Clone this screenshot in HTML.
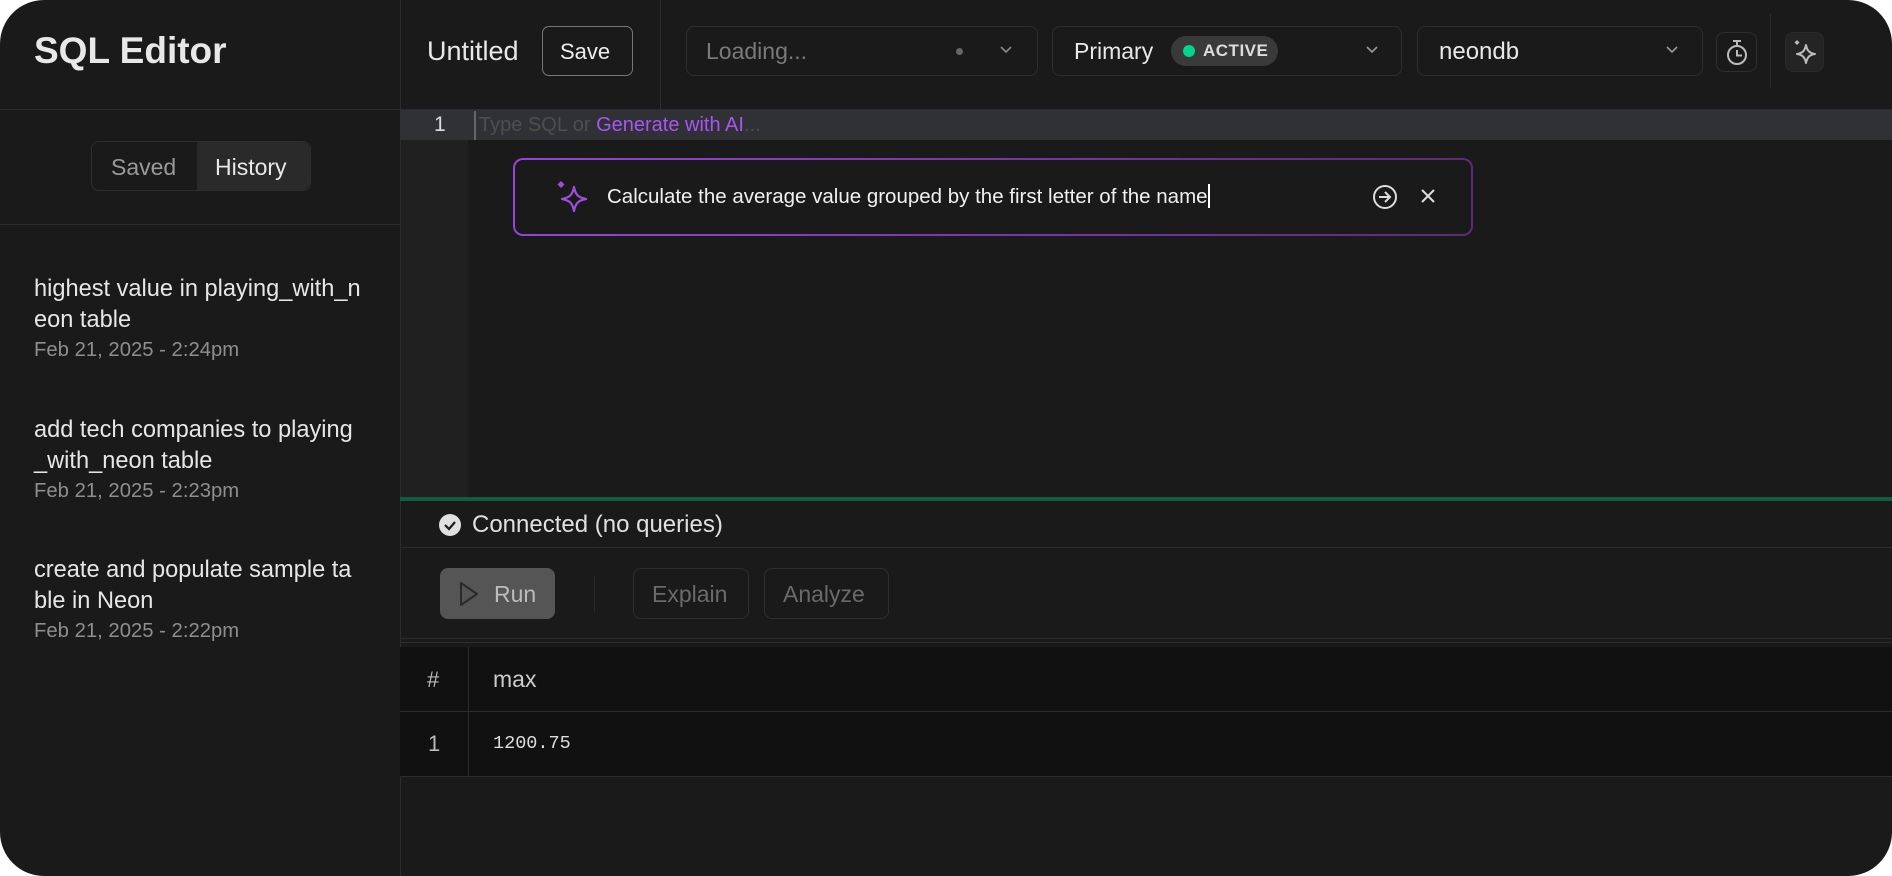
<!DOCTYPE html>
<html><head><meta charset="utf-8"><style>
*{box-sizing:border-box;margin:0;padding:0}
body{width:1892px;height:876px;background:#fff;font-family:"Liberation Sans",sans-serif;overflow:hidden}
.app{position:absolute;left:0;top:0;width:1892px;height:876px;background:#1a1a1a;border-radius:44px;overflow:hidden;color:#e6e6e6}
.abs{position:absolute}
.line{position:absolute;background:#2c2c2c}
.btn{position:absolute;border:1px solid #2e2e2e;border-radius:8px}
.t{position:absolute;white-space:nowrap}
</style></head><body><div class="app">
<!-- sidebar -->
<div class="line" style="left:400px;top:0;width:1px;height:876px"></div>
<div class="line" style="left:0;top:109px;width:1892px;height:1px"></div>
<div class="t" style="left:34px;top:30px;font-size:37px;font-weight:600;color:#e8e8e8">SQL Editor</div>
<div class="btn" style="left:91px;top:141px;width:220px;height:50px;border-color:#2e2e2e"></div>
<div class="abs" style="left:197px;top:142px;width:113px;height:48px;background:#2a2a2a;border-radius:0 8px 8px 0"></div>
<div class="t" style="left:111px;top:154px;font-size:23px;color:#9a9a9a">Saved</div>
<div class="t" style="left:215px;top:154px;font-size:23px;color:#e8e8e8">History</div>
<div class="line" style="left:0;top:224px;width:400px;height:1px"></div>
<div class="abs" style="left:34px;top:274px;font-size:23.6px;line-height:31px;color:#e6e6e6;width:360px">highest value in playing_with_n<br>eon table</div>
<div class="t" style="left:34px;top:339px;font-size:20.3px;color:#8e8e8e">Feb 21, 2025 - 2:24pm</div>
<div class="abs" style="left:34px;top:415px;font-size:23.6px;line-height:31px;color:#e6e6e6">add tech companies to playing<br>_with_neon table</div>
<div class="t" style="left:34px;top:480px;font-size:20.3px;color:#8e8e8e">Feb 21, 2025 - 2:23pm</div>
<div class="abs" style="left:34px;top:555px;font-size:23.6px;line-height:31px;color:#e6e6e6">create and populate sample ta<br>ble in Neon</div>
<div class="t" style="left:34px;top:620px;font-size:20.3px;color:#8e8e8e">Feb 21, 2025 - 2:22pm</div>
<!-- header -->
<div class="t" style="left:427px;top:36px;font-size:27px;color:#e8e8e8">Untitled</div>
<div class="btn" style="left:542px;top:26px;width:91px;height:50px;border-color:#777;border-radius:7px"></div>
<div class="t" style="left:560px;top:39px;font-size:22px;color:#eee">Save</div>
<div class="line" style="left:660px;top:0;width:1px;height:109px"></div>
<div class="btn" style="left:686px;top:26px;width:352px;height:50px"></div>
<div class="t" style="left:706px;top:38px;font-size:23px;color:#7a7a7a">Loading...</div>
<div class="abs" style="left:956px;top:48px;width:7px;height:7px;border-radius:50%;background:#666"></div>
<svg class="abs" style="left:998px;top:44px" width="16" height="12"><path d="M3 3l5 5 5-5" stroke="#888" stroke-width="1.6" fill="none"/></svg>
<div class="btn" style="left:1052px;top:26px;width:350px;height:50px"></div>
<div class="t" style="left:1074px;top:38px;font-size:23px;color:#e8e8e8">Primary</div>
<div class="abs" style="left:1171px;top:36px;width:107px;height:30px;border-radius:15px;background:#3a3a3a"></div>
<div class="abs" style="left:1183px;top:45px;width:12px;height:12px;border-radius:50%;background:#00d68f"></div>
<div class="t" style="left:1203px;top:41px;font-size:17px;font-weight:600;color:#ddd;letter-spacing:.5px">ACTIVE</div>
<svg class="abs" style="left:1364px;top:44px" width="16" height="12"><path d="M3 3l5 5 5-5" stroke="#999" stroke-width="1.6" fill="none"/></svg>
<div class="btn" style="left:1417px;top:26px;width:286px;height:50px"></div>
<div class="t" style="left:1439px;top:38px;font-size:24px;color:#e8e8e8">neondb</div>
<svg class="abs" style="left:1664px;top:44px" width="16" height="12"><path d="M3 3l5 5 5-5" stroke="#999" stroke-width="1.6" fill="none"/></svg>
<div class="btn" style="left:1716px;top:32px;width:41px;height:40px"></div>
<svg class="abs" style="left:1723px;top:38px" width="28" height="30"><path d="M10 3h8M14 3v4" stroke="#bbb" stroke-width="2"/><circle cx="14" cy="17" r="9" stroke="#bbb" stroke-width="2" fill="none"/><path d="M14 12v5.5h5" stroke="#bbb" stroke-width="2" fill="none"/></svg>
<div class="line" style="left:1770px;top:14px;width:1px;height:74px"></div>
<div class="abs" style="left:1785px;top:32px;width:39px;height:40px;border-radius:8px;background:#242424;border:1px solid #2a2a2a"></div>
<svg class="abs" style="left:1790px;top:38px" width="30" height="30"><path d="M16 7c1.3 6 3.3 8 9 9-5.7 1-7.7 3-9 9-1.3-6-3.3-8-9-9 5.7-1 7.7-3 9-9z" stroke="#bbb" stroke-width="2" fill="none" stroke-linejoin="round"/><path d="M7 2l2.5 2.5L7 7 4.5 4.5z" fill="#bbb"/></svg>
<!-- editor -->
<div class="abs" style="left:400px;top:110px;width:1492px;height:30px;background:#303134"></div>
<div class="abs" style="left:401px;top:140px;width:67px;height:358px;background:#202020"></div>
<div class="t" style="left:434px;top:113px;font-size:21px;color:#ddd">1</div>
<div class="abs" style="left:474px;top:111px;width:2px;height:29px;background:#666"></div>
<div class="t" style="left:479px;top:114px;font-size:20px;color:#4e4e4e">Type SQL or <span style="color:#a855f7">Generate with AI</span>...</div>
<div class="abs" style="left:513px;top:158px;width:960px;height:78px;border-radius:10px;background:linear-gradient(90deg,#9a42dc,#5d2a78)"></div>
<div class="abs" style="left:515px;top:160px;width:956px;height:74px;border-radius:8px;background:#1a1a1a"></div>
<svg class="abs" style="left:554px;top:180px" width="38" height="38"><path d="M20 7c1.6 8 4 10.4 12 12-8 1.6-10.4 4-12 12-1.6-8-4-10.4-12-12 8-1.6 10.4-4 12-12z" stroke="#9d4edd" stroke-width="2.2" fill="none" stroke-linejoin="round"/><path d="M7 1l3.5 3.5L7 8 3.5 4.5z" fill="#9d4edd"/></svg>
<div class="t" style="left:607px;top:184px;font-size:20.5px;color:#f0f0f0">Calculate the average value grouped by the first letter of the name<span style="display:inline-block;width:2px;height:24px;background:#fff;vertical-align:-5px"></span></div>
<svg class="abs" style="left:1371px;top:183px" width="28" height="28"><circle cx="14" cy="14" r="11" stroke="#ddd" stroke-width="2" fill="none"/><path d="M8 14h11M14 9l5 5-5 5" stroke="#ddd" stroke-width="2" fill="none"/></svg>
<svg class="abs" style="left:1418px;top:186px" width="20" height="20"><path d="M4 4l12 12M16 4L4 16" stroke="#ddd" stroke-width="2"/></svg>
<!-- status -->
<div class="abs" style="left:400px;top:497px;width:1492px;height:4px;background:#0f5e40"></div>
<svg class="abs" style="left:438px;top:513px" width="24" height="24"><circle cx="12" cy="12" r="11" fill="#e0e0e0"/><path d="M7 12l4 4 6-7" stroke="#1a1a1a" stroke-width="2.2" fill="none"/></svg>
<div class="t" style="left:472px;top:511px;font-size:24px;color:#e0e0e0">Connected (no queries)</div>
<div class="line" style="left:400px;top:547px;width:1492px;height:1px"></div>
<div class="abs" style="left:440px;top:568px;width:115px;height:51px;border-radius:8px;background:#555"></div>
<svg class="abs" style="left:457px;top:580px" width="24" height="28"><path d="M4 3l16 11-16 11z" stroke="#2a2a2a" stroke-width="2" fill="none" stroke-linejoin="round"/></svg>
<div class="t" style="left:494px;top:581px;font-size:23px;color:#bbb">Run</div>
<div class="line" style="left:594px;top:576px;width:1px;height:36px"></div>
<div class="btn" style="left:633px;top:568px;width:116px;height:51px"></div>
<div class="t" style="left:652px;top:581px;font-size:23px;color:#6a6a6a">Explain</div>
<div class="btn" style="left:764px;top:568px;width:125px;height:51px"></div>
<div class="t" style="left:783px;top:581px;font-size:23px;color:#6a6a6a">Analyze</div>
<div class="line" style="left:400px;top:638px;width:1492px;height:1px"></div>
<div class="line" style="left:400px;top:642px;width:1492px;height:1px"></div>
<!-- table -->
<div class="abs" style="left:400px;top:647px;width:1492px;height:129px;background:#111"></div>
<div class="line" style="left:468px;top:647px;width:1px;height:129px"></div>
<div class="line" style="left:400px;top:711px;width:1492px;height:1px"></div>
<div class="line" style="left:400px;top:776px;width:1492px;height:1px"></div>
<div class="t" style="left:427px;top:667px;font-size:22px;color:#bbb">#</div>
<div class="t" style="left:493px;top:666px;font-size:23px;color:#ccc">max</div>
<div class="t" style="left:428px;top:731px;font-size:22px;color:#bbb">1</div>
<div class="t" style="left:493px;top:733px;font-size:18.5px;color:#ddd;font-family:'Liberation Mono',monospace">1200.75</div>
</div></body></html>
